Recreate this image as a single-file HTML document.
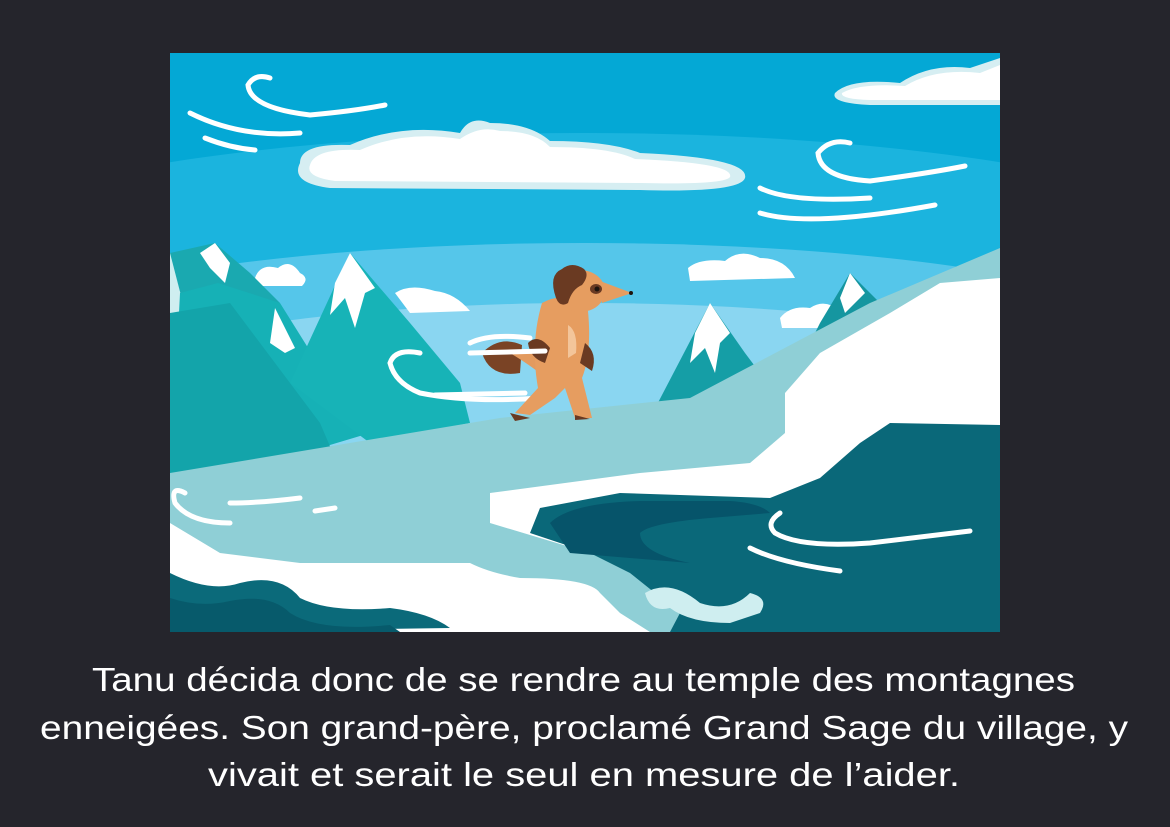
<!DOCTYPE html>
<html><head><meta charset="utf-8"><style>
html,body{margin:0;padding:0;background:#25252c;width:1170px;height:827px;overflow:hidden}
svg{position:absolute;left:0;top:0}
</style></head><body>
<svg width="1170" height="827" viewBox="0 0 1170 827">
<rect width="1170" height="827" fill="#25252c"/>
<g transform="translate(170,53)">
<clipPath id="c"><rect width="830" height="579"/></clipPath>
<g clip-path="url(#c)">
<rect width="830" height="579" fill="#04a8d5"/>
<ellipse cx="415" cy="230" rx="700" ry="150" fill="#1bb4de"/>
<ellipse cx="415" cy="300" rx="600" ry="110" fill="#55c6ea"/>
<ellipse cx="415" cy="340" rx="500" ry="90" fill="#8ad6f1"/>
<path d="M130,110 Q130,90 180,92 Q230,70 290,80 Q300,62 320,70 Q360,70 380,88 Q440,88 470,100 Q580,105 575,125 Q570,140 470,137 L160,135 Q120,130 130,110Z" fill="#d6eef2"/>
<path d="M140,112 Q145,95 190,97 Q235,77 290,86 Q310,72 330,78 Q365,78 380,94 Q440,94 465,106 Q565,110 560,124 Q555,132 470,130 L165,128 Q135,124 140,112Z" fill="#fff"/>
<path d="M665,40 Q680,25 730,30 Q760,10 800,15 L830,5 L830,52 L700,52 Q660,50 665,40Z" fill="#d6eef2"/>
<path d="M672,40 Q690,30 735,33 Q765,15 810,20 L830,12 L830,47 L700,47 Q670,46 672,40Z" fill="#fff"/>
<path d="M85,225 Q90,210 108,215 Q120,205 130,220 Q140,225 132,233 L90,233Z" fill="#fff"/>
<path d="M518,215 Q530,205 555,208 Q570,195 590,205 Q615,205 625,225 L520,228Z" fill="#fff"/>
<path d="M610,265 Q620,252 640,255 Q655,245 670,258 L672,275 L612,275Z" fill="#fff"/>
<path d="M225,240 Q240,230 265,238 Q285,240 300,258 L240,260Z" fill="#fff"/>
<path d="M0,200 L45,190 L80,220 L110,250 L100,330 L0,420Z" fill="#1aa9b0"/>
<path d="M0,200 L15,258 L20,290 L0,300Z" fill="#cfeef0"/>
<path d="M30,200 L45,190 L60,210 L55,230 L40,215Z" fill="#fff"/>
<path d="M10,240 L48,230 L110,250 L160,330 L200,380 L0,440Z" fill="#16b1b6"/>
<path d="M0,260 L60,250 L150,370 L180,440 L0,470Z" fill="#13a4aa"/>
<path d="M180,200 L240,270 L290,330 L300,370 L200,390 L120,330Z" fill="#17b3b7"/>
<path d="M180,200 L205,235 L195,240 L185,275 L175,245 L160,262 L165,230Z" fill="#fff"/>
<path d="M105,255 L125,295 L115,300 L100,290Z" fill="#fff"/>
<path d="M540,250 L575,300 L620,360 L480,365Z" fill="#159ea6"/>
<path d="M540,250 L560,280 L550,290 L545,320 L535,295 L520,310 L525,280Z" fill="#fff"/>
<path d="M680,220 L720,260 L690,320 L620,330 L650,270Z" fill="#1596a0"/>
<path d="M680,220 L695,240 L675,260 L670,245Z" fill="#fff"/>
<path d="M0,420 L330,365 L520,345 L700,250 L830,195 L830,579 L0,579Z" fill="#8fcfd6"/>
<path d="M830,225 L770,230 L720,260 L650,300 L615,340 L615,380 L580,410 L470,420 L320,440 L320,470 L420,500 L640,530 L830,520Z" fill="#fff"/>
<path d="M830,372 L720,370 L690,390 L650,425 L600,445 L450,440 L370,455 L360,480 L420,500 L460,520 L510,560 L500,579 L830,579Z" fill="#0a6879"/>
<path d="M380,470 Q400,450 470,448 L560,448 Q590,450 600,460 L540,465 Q480,470 470,480 Q470,500 520,510 L400,500Z" fill="#06546a"/>
<path d="M0,470 L50,500 L130,510 L240,510 L300,510 Q320,520 350,525 Q420,525 430,540 L450,560 L480,579 L0,579Z" fill="#fff"/>
<path d="M0,520 Q40,540 70,530 Q110,520 130,545 Q160,560 220,555 Q260,560 280,575 L0,579Z" fill="#0b6a7a"/>
<path d="M0,545 Q30,555 60,548 Q100,540 120,560 Q150,579 220,572 L230,579 L0,579Z" fill="#075a6b"/>
<path d="M475,540 Q500,525 530,550 Q560,560 580,540 Q600,545 590,560 L560,570 Q520,570 500,555 Q480,560 475,540Z" fill="#cfeef0"/>
<g fill="none" stroke="#fff" stroke-width="5" stroke-linecap="round">
<path d="M20,60 Q70,85 130,80"/><path d="M35,85 Q60,95 85,97"/>
<path d="M100,25 Q85,20 78,32 Q80,55 140,62 Q185,58 215,52"/>
<path d="M590,135 Q620,150 700,145"/><path d="M590,160 Q640,175 765,152"/>
<path d="M680,90 Q660,85 648,100 Q650,125 700,128 Q760,120 795,113"/>
<path d="M250,300 Q225,295 220,310 Q225,330 250,340 Q300,350 370,345"/>
<path d="M300,290 Q320,280 360,285"/>
<path d="M60,450 Q90,450 130,445"/><path d="M145,458 L165,455"/>
<path d="M15,440 Q0,432 5,450 Q20,470 60,470"/>
<path d="M610,460 Q595,470 605,480 Q630,495 700,490 L800,478"/>
<path d="M580,495 Q610,510 670,518"/>
</g>
<g>
<path d="M312,300 Q330,282 352,292 L350,320 Q320,325 312,300Z" fill="#7a4325"/>
<path d="M340,300 Q360,312 372,322 L382,300 Z" fill="#e39a5e"/>
<path d="M372,250 Q398,236 418,258 Q422,300 412,325 L422,365 L405,365 L395,335 L385,345 L360,362 L345,360 L368,335 Q360,290 372,250Z" fill="#e69d60"/>
<path d="M398,272 Q408,278 406,300 L398,305Z" fill="#f3c59a"/>
<path d="M358,290 Q368,280 380,295 L375,310 Q360,305 358,290Z" fill="#6a3a22"/>
<path d="M415,290 Q428,300 422,318 L410,310Z" fill="#6a3a22"/>
<ellipse cx="410" cy="238" rx="25" ry="21" fill="#e69d60"/>
<path d="M430,228 L462,240 L432,250Z" fill="#e69d60"/>
<path d="M386,245 Q378,222 392,216 Q402,208 414,216 Q420,222 412,232 Q402,236 398,250 Q390,255 386,245Z" fill="#6a3a22"/>
<ellipse cx="426" cy="236" rx="6" ry="5" fill="#6a3a22"/>
<circle cx="427" cy="236" r="2.5" fill="#1e140e"/>
<circle cx="461" cy="240" r="2" fill="#1e140e"/>
<path d="M340,360 L360,365 L345,368Z M405,362 L420,366 L405,367Z" fill="#6a3a22"/>
</g>
<g fill="none" stroke="#fff" stroke-width="5" stroke-linecap="round">
<path d="M300,300 L375,298"/><path d="M265,342 L355,340"/>
</g>
</g>
</g>
<g fill="#fff" font-family="Liberation Sans, sans-serif" font-size="33">
<text x="92" y="691" textLength="983" lengthAdjust="spacingAndGlyphs">Tanu décida donc de se rendre au temple des montagnes</text>
<text x="40" y="739" textLength="1088" lengthAdjust="spacingAndGlyphs">enneigées. Son grand-père, proclamé Grand Sage du village, y</text>
<text x="208" y="786" textLength="752" lengthAdjust="spacingAndGlyphs">vivait et serait le seul en mesure de l’aider.</text>
</g>
</svg>
</body></html>
